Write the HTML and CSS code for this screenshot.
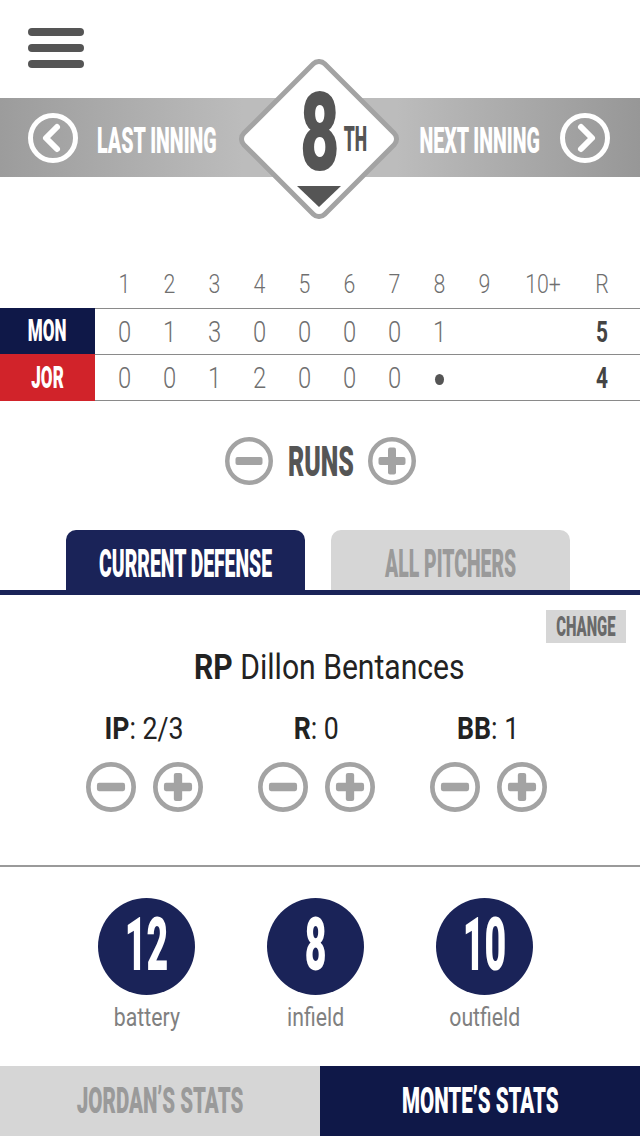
FILE: index.html
```html
<!DOCTYPE html>
<html lang="en">
<head>
<meta charset="utf-8">
<title>Scorekeeper</title>
<link rel="stylesheet" href="styles.css">
</head>
<body>
<div class="screen">
  <header class="top">
    <div class="burger"><span></span><span></span><span></span></div>
  </header>

  <section class="band">
    <div class="nav nav-left">
      <svg class="arrow" viewBox="0 0 50 50"><circle cx="25" cy="25" r="22.5" fill="none" stroke="#fff" stroke-width="5"/><polyline points="29,14 18,25 29,36" fill="none" stroke="#fff" stroke-width="6" stroke-linecap="round" stroke-linejoin="round"/></svg>
      <div class="nav-label fit"><span>LAST INNING</span></div>
    </div>
    <div class="nav nav-right">
      <div class="nav-label fit"><span>NEXT INNING</span></div>
      <svg class="arrow" viewBox="0 0 50 50"><circle cx="25" cy="25" r="22.5" fill="none" stroke="#fff" stroke-width="5"/><polyline points="21,14 32,25 21,36" fill="none" stroke="#fff" stroke-width="6" stroke-linecap="round" stroke-linejoin="round"/></svg>
    </div>
    <div class="diamond">
      <svg class="diamond-bg" viewBox="0 0 160 160"><rect x="22.85" y="22.85" width="114.3" height="114.3" rx="8" transform="rotate(45 80 80)" fill="#fff" stroke="#a3a3a3" stroke-width="5"/></svg>
      <div class="inning">
        <div class="inning-num fit"><span>8</span></div>
        <div class="inning-sfx fit"><span>TH</span></div>
      </div>
      <div class="tri"></div>
    </div>
  </section>

  <section class="board">
    <div class="board-head">
      <div>1</div><div>2</div><div>3</div><div>4</div><div>5</div><div>6</div><div>7</div><div>8</div><div>9</div><div>10+</div><div>R</div>
    </div>
    <div class="board-row">
      <div class="team mon fit"><span>MON</span></div>
      <div class="cells">
        <div>0</div><div>1</div><div>3</div><div>0</div><div>0</div><div>0</div><div>0</div><div>1</div><div></div><div></div><div class="total">5</div>
      </div>
    </div>
    <div class="board-row">
      <div class="team jor fit"><span>JOR</span></div>
      <div class="cells">
        <div>0</div><div>0</div><div>1</div><div>2</div><div>0</div><div>0</div><div>0</div><div><span class="dot"></span></div><div></div><div></div><div class="total">4</div>
      </div>
    </div>
  </section>

  <section class="runs">
    <svg class="pm" viewBox="0 0 48 48"><circle cx="24" cy="24" r="21.75" fill="none" stroke="#a3a3a3" stroke-width="4.5"/><rect x="10.5" y="20" width="27" height="8" rx="2" fill="#a3a3a3"/></svg>
    <div class="runs-label fit"><span>RUNS</span></div>
    <svg class="pm" viewBox="0 0 48 48"><circle cx="24" cy="24" r="21.75" fill="none" stroke="#a3a3a3" stroke-width="4.5"/><rect x="10.5" y="20" width="27" height="8" rx="2" fill="#a3a3a3"/><rect x="20" y="10.5" width="8" height="27" rx="2" fill="#a3a3a3"/></svg>
  </section>

  <nav class="tabs">
    <div class="tab tab-on fit"><span>CURRENT DEFENSE</span></div>
    <div class="tab tab-off fit"><span>ALL PITCHERS</span></div>
  </nav>
  <div class="tab-line"></div>

  <section class="panel">
    <div class="change-row"><div class="change fit"><span>CHANGE</span></div></div>
    <div class="pitcher fit"><span><b>RP</b> Dillon Bentances</span></div>
    <div class="stats">
      <div class="stat">
        <div class="stat-label fit"><span><b>IP</b>: 2/3</span></div>
        <div class="stat-btns">
          <svg class="pm2" viewBox="0 0 48 48"><circle cx="24" cy="24" r="21.75" fill="none" stroke="#a3a3a3" stroke-width="4.5"/><rect x="10.5" y="20" width="27" height="8" rx="2" fill="#a3a3a3"/></svg>
          <svg class="pm2" viewBox="0 0 48 48"><circle cx="24" cy="24" r="21.75" fill="none" stroke="#a3a3a3" stroke-width="4.5"/><rect x="10.5" y="20" width="27" height="8" rx="2" fill="#a3a3a3"/><rect x="20" y="10.5" width="8" height="27" rx="2" fill="#a3a3a3"/></svg>
        </div>
      </div>
      <div class="stat">
        <div class="stat-label fit"><span><b>R</b>: 0</span></div>
        <div class="stat-btns">
          <svg class="pm2" viewBox="0 0 48 48"><circle cx="24" cy="24" r="21.75" fill="none" stroke="#a3a3a3" stroke-width="4.5"/><rect x="10.5" y="20" width="27" height="8" rx="2" fill="#a3a3a3"/></svg>
          <svg class="pm2" viewBox="0 0 48 48"><circle cx="24" cy="24" r="21.75" fill="none" stroke="#a3a3a3" stroke-width="4.5"/><rect x="10.5" y="20" width="27" height="8" rx="2" fill="#a3a3a3"/><rect x="20" y="10.5" width="8" height="27" rx="2" fill="#a3a3a3"/></svg>
        </div>
      </div>
      <div class="stat">
        <div class="stat-label fit"><span><b>BB</b>: 1</span></div>
        <div class="stat-btns">
          <svg class="pm2" viewBox="0 0 48 48"><circle cx="24" cy="24" r="21.75" fill="none" stroke="#a3a3a3" stroke-width="4.5"/><rect x="10.5" y="20" width="27" height="8" rx="2" fill="#a3a3a3"/></svg>
          <svg class="pm2" viewBox="0 0 48 48"><circle cx="24" cy="24" r="21.75" fill="none" stroke="#a3a3a3" stroke-width="4.5"/><rect x="10.5" y="20" width="27" height="8" rx="2" fill="#a3a3a3"/><rect x="20" y="10.5" width="8" height="27" rx="2" fill="#a3a3a3"/></svg>
        </div>
      </div>
    </div>
  </section>

  <div class="divider"></div>

  <section class="counts">
    <div class="count">
      <div class="bubble fit"><span>12</span></div>
      <div class="count-label fit"><span>battery</span></div>
    </div>
    <div class="count">
      <div class="bubble fit"><span>8</span></div>
      <div class="count-label fit"><span>infield</span></div>
    </div>
    <div class="count">
      <div class="bubble fit"><span>10</span></div>
      <div class="count-label fit"><span>outfield</span></div>
    </div>
  </section>

  <footer class="bottom">
    <div class="bottom-tab bottom-off fit"><span>JORDAN’S STATS</span></div>
    <div class="bottom-tab bottom-on fit"><span>MONTE’S STATS</span></div>
  </footer>
</div>
</body>
</html>
```

FILE: styles.css
```css
* {
  box-sizing: border-box;
  margin: 0;
  padding: 0;
}

body {
  background: #fff;
  font-family: Roboto, "Liberation Sans", sans-serif;
  width: 640px;
  height: 1136px;
  overflow: hidden;
}

.screen {
  width: 640px;
  height: 1136px;
  display: flex;
  flex-direction: column;
}

/* horizontally condensed text helper */
.fit {
  display: flex;
  justify-content: center;
  align-items: center;
  white-space: nowrap;
}

.fit > span {
  display: block;
}

/* header */
.top {
  height: 98px;
  padding: 28px 0 0 28px;
  flex-shrink: 0;
}

.burger {
  width: 56px;
  display: flex;
  flex-direction: column;
  gap: 8px;
}

.burger span {
  height: 8px;
  border-radius: 4px;
  background: #555;
}

/* inning band */
.band {
  position: relative;
  height: 79px;
  flex-shrink: 0;
  background: linear-gradient(to right, #9c9c9c 0%, #bcbcbc 38%, #bcbcbc 62%, #979797 100%);
  display: flex;
  align-items: center;
  justify-content: space-between;
}

.nav {
  display: flex;
  align-items: center;
}

.nav-left {
  padding-left: 28px;
}

.nav-right {
  padding-right: 30px;
}

.arrow {
  width: 50px;
  height: 50px;
  display: block;
}

.nav-label {
  width: 120px;
  margin-left: 19px;
  padding-top: 6px;
  color: #fff;
  font-weight: 900;
  font-size: 37px;
  line-height: 28px;
}

.nav-right .nav-label {
  width: 124px;
  margin: 0 18px 0 0;
}

.nav-label span {
  transform: scaleX(0.53);
}

.diamond {
  position: absolute;
  left: 239px;
  top: -39px;
  width: 160px;
  height: 160px;
  display: flex;
  flex-direction: column;
}

.diamond-bg {
  position: absolute;
  left: 0;
  top: 0;
  width: 160px;
  height: 160px;
}

.inning {
  position: relative;
  display: flex;
  align-items: flex-start;
  margin: 34px 0 0 63px;
  color: #555;
  font-weight: 900;
}

.inning-num {
  width: 35px;
  font-size: 110px;
  line-height: 79px;
}

.inning-num span {
  transform: scaleX(0.62);
}

.inning-sfx {
  width: 23px;
  margin: 34px 0 0 7px;
  font-size: 35px;
  line-height: 26px;
}

.inning-sfx span {
  transform: scaleX(0.5);
}

.tri {
  position: relative;
  align-self: center;
  margin-top: 14px;
  width: 0;
  height: 0;
  border-left: 22px solid transparent;
  border-right: 22px solid transparent;
  border-top: 21px solid #555;
}

/* scoreboard */
.board {
  margin-top: 89px;
  flex-shrink: 0;
}

.board-head {
  display: grid;
  grid-template-columns: repeat(9, 45px) 72px 46px;
  padding-left: 102px;
  height: 36px;
  margin-bottom: 6px;
  align-items: center;
  font-size: 26px;
  font-weight: 300;
  color: #6f6f6f;
}

.board-head > div,
.cells > div {
  text-align: center;
  transform: scaleX(0.82);
}

.board-row {
  display: flex;
  height: 46px;
}

.board-row + .board-row {
  height: 47px;
}

.team {
  width: 95px;
  color: #fff;
  font-weight: 900;
  font-size: 31px;
  line-height: 22px;
}

.team span {
  transform: scaleX(0.55);
}

.mon {
  background: #0f1848;
}

.jor {
  background: #d1232a;
}

.cells {
  flex: 1;
  display: grid;
  grid-template-columns: repeat(9, 45px) 72px 46px;
  padding-left: 7px;
  border-top: 1px solid #8a8a8a;
  align-items: center;
  font-size: 29px;
  font-weight: 300;
  color: #6f6f6f;
}

.board-row + .board-row .cells {
  border-bottom: 1px solid #8a8a8a;
}

.cells > .total {
  font-weight: 700;
  color: #444;
  transform: scaleX(0.72);
}

.dot {
  display: inline-block;
  width: 11px;
  height: 11px;
  border-radius: 50%;
  background: #555;
  vertical-align: middle;
}

/* runs */
.runs {
  margin-top: 36px;
  height: 48px;
  flex-shrink: 0;
  display: flex;
  justify-content: center;
  align-items: center;
}

.pm {
  width: 48px;
  height: 48px;
  display: block;
}

.runs-label {
  width: 66px;
  margin: 0 14px 0 15px;
  color: #555;
  font-weight: 900;
  font-size: 43px;
  line-height: 31px;
}

.runs-label span {
  transform: scaleX(0.58);
}

/* tabs */
.tabs {
  margin-top: 45px;
  height: 60px;
  flex-shrink: 0;
  display: flex;
  gap: 26px;
  padding-left: 66px;
}

.tab {
  width: 239px;
  border-radius: 10px 10px 0 0;
  font-weight: 900;
  font-size: 38px;
  line-height: 28px;
  padding-top: 8px;
}

.tab span {
  transform: scaleX(0.51);
}

.tab-on {
  background: #1a2358;
  color: #fff;
}

.tab-off {
  background: #d6d6d6;
  color: #9a9a9a;
}

.tab-line {
  height: 5px;
  flex-shrink: 0;
  background: #1a2358;
}

/* current defense panel */
.panel {
  padding-top: 15px;
  flex-shrink: 0;
}

.change-row {
  display: flex;
  justify-content: flex-end;
  padding-right: 14px;
}

.change {
  width: 80px;
  height: 33px;
  background: #d6d6d6;
  color: #6a6a6a;
  font-weight: 900;
  font-size: 27px;
  line-height: 20px;
}

.change span {
  transform: scaleX(0.55);
}

.pitcher {
  margin-top: 12px;
  padding-left: 18px;
  font-size: 35px;
  line-height: 25px;
  color: #222;
}

.pitcher span {
  transform: scaleX(0.86);
}

.stats {
  display: grid;
  grid-template-columns: repeat(3, 172px);
  padding-left: 58px;
  margin-top: 38px;
}

.stat {
  display: flex;
  flex-direction: column;
  align-items: center;
}

.stat-label {
  font-size: 31px;
  line-height: 22px;
  color: #222;
}

.stat-label span {
  transform: scaleX(0.86);
}

.stat-btns {
  margin-top: 22px;
  display: flex;
  gap: 17px;
}

.pm2 {
  width: 50px;
  height: 50px;
  display: block;
}

.divider {
  margin-top: 53px;
  height: 2px;
  flex-shrink: 0;
  background: #9a9a9a;
}

/* position counts */
.counts {
  display: grid;
  grid-template-columns: repeat(3, 169px);
  padding-left: 62px;
  margin-top: 31px;
  flex-shrink: 0;
}

.count {
  display: flex;
  flex-direction: column;
  align-items: center;
}

.bubble {
  width: 97px;
  height: 97px;
  border-radius: 50%;
  background: #1a2358;
  color: #fff;
  font-weight: 900;
  font-size: 75px;
  line-height: 54px;
  padding-bottom: 6px;
}

.bubble span {
  transform: scaleX(0.5);
}

.count-label {
  margin-top: 13px;
  font-size: 25px;
  line-height: 19px;
  color: #808080;
}

.count-label span {
  transform: scaleX(0.85);
}

/* bottom bar */
.bottom {
  margin-top: auto;
  height: 70px;
  flex-shrink: 0;
  display: flex;
}

.bottom-tab {
  flex: 1;
  font-weight: 900;
  font-size: 36px;
  line-height: 26px;
}

.bottom-tab span {
  transform: scaleX(0.57);
}

.bottom-off {
  background: #d6d6d6;
  color: #9a9a9a;
}

.bottom-on {
  background: #0f1848;
  color: #fff;
}
```
